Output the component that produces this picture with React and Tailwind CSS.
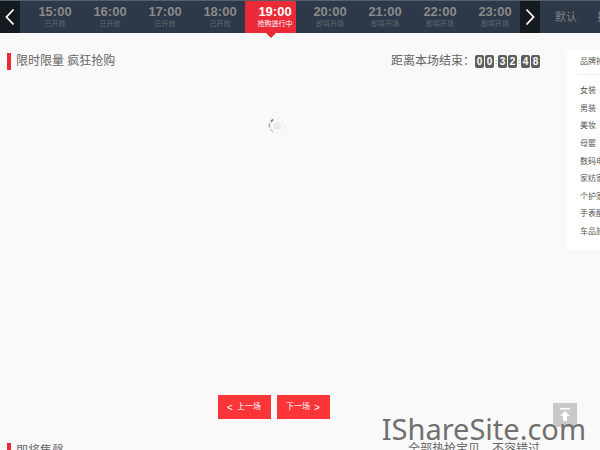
import React from "react";

const sessions = [
  { time: "15:00", note: "已开抢" },
  { time: "16:00", note: "已开抢" },
  { time: "17:00", note: "已开抢" },
  { time: "18:00", note: "已开抢" },
  { time: "19:00", note: "抢购进行中", active: true },
  { time: "20:00", note: "即将开场" },
  { time: "21:00", note: "即将开场" },
  { time: "22:00", note: "即将开场" },
  { time: "23:00", note: "即将开场" },
];

const categories = ["女装", "男装", "美妆", "母婴", "数码电器", "家纺家居", "个护家电", "手表配饰", "车品旅行"];

const countdown = ["00", "32", "48"];

function Chevron({ d }) {
  return (
    <svg width="10" height="18" viewBox="0 0 10 18" fill="none" stroke="#fff" strokeWidth="1.8" aria-hidden="true">
      <path d={d} />
    </svg>
  );
}

function Session({ time, note, active }) {
  return (
    <li className="w-[55px]">
      <button
        className={
          "relative flex h-full w-[51px] flex-col items-center pt-[4px] pl-[9px] whitespace-nowrap " +
          (active ? "bg-[#eb2a38] text-white" : "text-[#8a8a8a]")
        }
      >
        <span className="text-[13px] leading-[14px] font-bold">{time}</span>
        <span className={"text-[7px] leading-[9px] " + (active ? "" : "text-[#66696d]")}>{note}</span>
        {active && (
          <svg className="absolute top-full left-[21px]" width="10" height="5" viewBox="0 0 10 5" aria-hidden="true">
            <path d="M0 0h10L5 5z" fill="#eb2a38" />
          </svg>
        )}
      </button>
    </li>
  );
}

function Heading({ children }) {
  return <h2 className="border-l-4 border-[#eb2a38] pl-[5px] text-[12px] leading-[17px]">{children}</h2>;
}

function Countdown() {
  return (
    <span className="flex items-center gap-px">
      {countdown.map((pair, i) => (
        <React.Fragment key={i}>
          {i > 0 && <span className="w-[2px] text-[8px] leading-[13px]">:</span>}
          {pair.split("").map((digit, j) => (
            <span
              key={j}
              className="w-[9px] rounded-xs bg-[#5e5e5e] text-center text-[10px] leading-[13px] font-bold text-white"
            >
              {digit}
            </span>
          ))}
        </React.Fragment>
      ))}
    </span>
  );
}

function Spinner() {
  return (
    <svg width="18" height="18" viewBox="0 0 18 18" fill="none" role="img" aria-label="加载中">
      <circle cx="9" cy="9" r="4" fill="#ebebeb" />
      <circle cx="9" cy="9" r="7.5" stroke="#ececec" strokeDasharray="2 1.5" />
      <path d="M2.8 4.8L5 2.3" stroke="#858585" strokeWidth="1.8" />
      <path d="M1.4 10.5V6.4" stroke="#a5a5a5" strokeWidth="1.4" />
      <path d="M5 15.2L2.4 12" stroke="#cfcfcf" strokeWidth="1.4" />
    </svg>
  );
}

export default function App() {
  return (
    <div className="relative flex h-screen flex-col overflow-hidden bg-[#f9f9f9] font-['Liberation_Sans','Noto_Sans_CJK_SC',sans-serif] text-[#666]">
      <nav className="flex h-[33px] shrink-0 border-t border-[#56606b] bg-[#2d3848]">
        <button aria-label="向前" className="flex w-[20px] shrink-0 items-center justify-center bg-[#151920]">
          <Chevron d="M8.500 1.500L1.500 9l7 7.500" />
        </button>
        <ul className="flex shrink-0 pl-[5px]">
          {sessions.map((s) => (
            <Session key={s.time} {...s} />
          ))}
        </ul>
        <button aria-label="向后" className="flex w-[20px] shrink-0 items-center justify-center bg-[#151920]">
          <Chevron d="M1.500 1.500L8.500 9l-7 7.500" />
        </button>
        <div className="flex flex-1 items-center gap-[20px] overflow-hidden pl-[15px] text-[11px] whitespace-nowrap text-[#818181]">
          <a href="#default">默认</a>
          <a href="#sales">折扣</a>
        </div>
      </nav>

      <div className="flex min-h-0 flex-1">
        <main className="min-w-0 flex-1 pt-[20px] pl-[7px]">
          <section>
            <header className="flex justify-between">
              <Heading>限时限量 疯狂抢购</Heading>
              <p className="flex items-center text-[12px] leading-[17px]">
                距离本场结束：
                <Countdown />
              </p>
            </header>
            <div className="flex h-[325px] justify-center pt-[47px] pl-[6px]">
              <Spinner />
            </div>
            <div className="flex justify-center gap-[6px] text-[8px] text-white">
              <button className="flex h-[24px] w-[53px] items-center justify-center gap-[4px] bg-[#fc3539]">
                <span className="text-[10px]">&lt;</span>上一场
              </button>
              <button className="flex h-[24px] w-[53px] items-center justify-center gap-[4px] bg-[#fc3539]">
                下一场<span className="text-[10px]">&gt;</span>
              </button>
            </div>
          </section>
          <section className="flex items-start justify-between pt-[24px]">
            <Heading>即将售罄</Heading>
            <p className="text-[12px] leading-[12px]">全部热抢宝贝，不容错过</p>
          </section>
        </main>

        <aside className="ml-[27px] w-[33px] shrink-0 self-start overflow-hidden pt-[17px] text-[8px] whitespace-nowrap text-[#555]">
          <div className="bg-white pb-[10px]">
            <h3 className="ml-[10px] border-b border-[#eee] pl-[3px] leading-[24px]">品牌抢购</h3>
            <ul className="mt-[8px] flex h-[157px] flex-col justify-between pl-[13px] leading-[16px]">
              {categories.map((c) => (
                <li key={c}>
                  <a href="#category">{c}</a>
                </li>
              ))}
            </ul>
          </div>
        </aside>
      </div>

      <button aria-label="回到顶部" className="absolute right-[23px] bottom-[23px] flex size-[24px] items-center justify-center bg-[#c9c9c9]">
        <svg width="12" height="14" viewBox="0 0 12 14" fill="#fff" aria-hidden="true">
          <path d="M1 0h10v1.500H1zM6 3l5 5H8v5H4V8H1z" />
        </svg>
      </button>
      <p className="absolute right-[14px] bottom-[1px] font-['Noto_Sans',sans-serif] text-[29px] leading-[40px] text-[#707070]">
        IShareSite.com
      </p>
    </div>
  );
}
